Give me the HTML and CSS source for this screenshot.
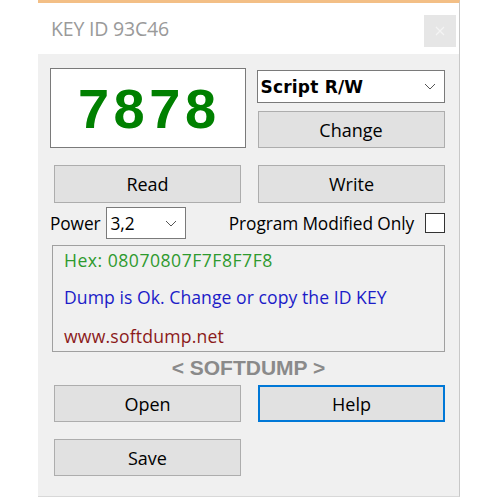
FILE: index.html
```html
<!DOCTYPE html>
<html>
<head>
<meta charset="utf-8">
<link rel="stylesheet" href="styles.css">
</head>
<body>
<div class="window">
  <div class="titlebar">
    <span class="title">KEY ID 93C46</span>
    <span class="close"><svg width="10" height="10" viewBox="0 0 10 10"><path d="M1 1L9 9M9 1L1 9" stroke="#f4f4f4" stroke-width="1.2"/></svg></span>
  </div>
  <div class="content">
    <div class="row1">
      <div class="keybox">7878</div>
      <div class="rcol">
        <div class="select big"><span>Script R/W</span><svg class="chev" width="12" height="7" viewBox="0 0 12 7"><path d="M1 1L6 6L11 1" fill="none" stroke="#555" stroke-width="1"/></svg></div>
        <div class="btn change">Change</div>
      </div>
    </div>
    <div class="row2">
      <div class="btn">Read</div>
      <div class="btn">Write</div>
    </div>
    <div class="row3">
      <span class="lbl">Power</span>
      <div class="select small"><span>3,2</span><svg class="chev" width="12" height="7" viewBox="0 0 12 7"><path d="M1 1L6 6L11 1" fill="none" stroke="#555" stroke-width="1"/></svg></div>
      <span class="lbl pmo">Program Modified Only</span>
      <span class="check"></span>
    </div>
    <div class="panel">
      <div class="hex">Hex: 08070807F7F8F7F8</div>
      <div class="msg">Dump is Ok. Change or copy the ID KEY</div>
      <div class="url">www.softdump.net</div>
    </div>
    <div class="brand">&lt; SOFTDUMP &gt;</div>
    <div class="row4">
      <div class="btn low">Open</div>
      <div class="btn low focus">Help</div>
    </div>
    <div class="row5">
      <div class="btn low">Save</div>
    </div>
  </div>
</div>
</body>
</html>
```
FILE: styles.css
```css
html, body {
  margin: 0;
  padding: 0;
  background: #ffffff;
}
body {
  font-family: "Open Sans", "Noto Sans", sans-serif;
  width: 500px;
  height: 500px;
  overflow: hidden;
}
.window {
  margin-left: 38px;
  width: 421px;
  border-top: 3px solid #f3bf86;
  border-right: 1px solid #c8c8c8;
  border-bottom: 1px solid #d8d8d8;
  background: #f0f0f0;
}
.titlebar {
  height: 51px;
  background: #ffffff;
  display: flex;
  align-items: center;
  justify-content: space-between;
}
.title {
  margin-left: 13px;
  font-size: 19.5px;
  color: #9a9a9a;
  letter-spacing: -0.2px;
}
.close {
  width: 32px;
  height: 32px;
  margin-right: 3px;
  margin-top: 5px;
  background: #e6e6e6;
  display: flex;
  align-items: center;
  justify-content: center;
}
.content {
  height: 442px;
  padding-left: 12px;
  padding-right: 14px;
}
.row1 {
  display: flex;
  padding-top: 14px;
}
.keybox {
  width: 191px;
  height: 78px;
  border: 1px solid #7a7a7a;
  background: #fff;
  color: #008000;
  font-family: "Liberation Sans", Arial, sans-serif;
  font-weight: bold;
  font-size: 56px;
  letter-spacing: 4.5px;
  padding-left: 3px;
  box-sizing: content-box;
  display: flex;
  align-items: center;
  justify-content: center;
}
.rcol {
  margin-left: 11px;
  width: 189px;
  display: flex;
  flex-direction: column;
}
.select {
  box-sizing: border-box;
  border: 1px solid #7a7a7a;
  background: #fff;
  display: flex;
  align-items: center;
  justify-content: space-between;
  color: #000;
}
.select.big {
  margin-top: 2px;
  height: 33px;
  padding: 0 8px 0 3px;
  font-family: "DejaVu Sans", Verdana, sans-serif;
  font-weight: bold;
  font-size: 17px;
  letter-spacing: 0.2px;
}
.btn {
  box-sizing: border-box;
  width: 187px;
  height: 38px;
  border: 1px solid #adadad;
  background: #e1e1e1;
  display: flex;
  align-items: center;
  justify-content: center;
  font-size: 18px;
  color: #000;
}
.btn.low {
  height: 37px;
}
.btn.change {
  margin-top: 8px;
  margin-left: 1px;
  height: 37px;
}
.btn.focus {
  border: 2px solid #0078d7;
}
.row2, .row4, .row5 {
  display: flex;
  padding-left: 4px;
  gap: 17px;
}
.row2 {
  margin-top: 17px;
}
.row3 {
  display: flex;
  align-items: center;
  margin-top: 4px;
  height: 32px;
}
.lbl {
  font-size: 17.3px;
  color: #000;
  letter-spacing: -0.1px;
}
.select.small {
  margin-left: 6px;
  width: 80px;
  height: 32px;
  padding: 0 8px 0 3px;
  font-size: 17.3px;
}
.pmo {
  margin-left: auto;
}
.check {
  box-sizing: border-box;
  width: 20px;
  height: 20px;
  border: 1px solid #333;
  background: #fff;
  margin-left: 11px;
}
.panel {
  box-sizing: border-box;
  margin-top: 6px;
  margin-left: 2px;
  width: 393px;
  height: 107px;
  border: 1px solid #a0a0a0;
  padding: 0 0 0 11px;
  font-size: 17.6px;
  letter-spacing: 0.05px;
}
.panel .hex { color: #2e9a2e; line-height: 28px; letter-spacing: 0.5px; }
.panel .msg { color: #1c1cc8; margin-top: 4px; line-height: 38px; }
.panel .url { color: #8b1a1a; margin-top: 1px; line-height: 38px; letter-spacing: 0.2px; }
.brand {
  text-align: center;
  margin-top: 4px;
  font-family: "Liberation Sans", Arial, sans-serif;
  font-weight: bold;
  font-size: 21px;
  color: #8a8a8a;
  height: 25px;
  line-height: 24px;
  padding-left: 2px;
}
.row4 {
  margin-top: 4px;
}
.row5 {
  margin-top: 17px;
}
```
